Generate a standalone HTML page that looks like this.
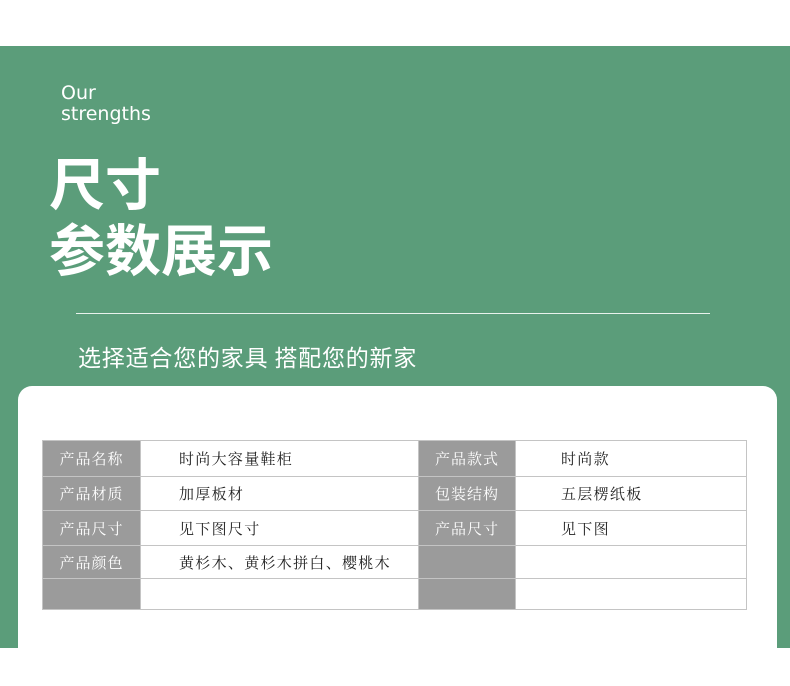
<!DOCTYPE html>
<html><head><meta charset="utf-8"><style>
*{margin:0;padding:0;box-sizing:border-box}
body{width:790px;height:648px;background:#fff;position:relative;overflow:hidden;font-family:"Liberation Sans","Noto Sans CJK SC",sans-serif}
.g{position:absolute;left:0;top:46px;width:790px;height:602px;background:#5b9d7a}
.t{position:absolute;color:#fff}
.card{position:absolute;left:18px;top:386px;width:759px;height:300px;background:#fff;border-radius:14px}
table{position:absolute;left:42px;top:440px;border-collapse:collapse;font-family:"Noto Serif CJK SC","Noto Sans CJK SC",serif;font-size:15px;color:#222}
td{border:1px solid #c4c4c4;padding:0;letter-spacing:1.3px}
td.h{background:#9b9b9b;color:#fff;text-align:center;letter-spacing:1px}
td.v{padding-left:38px}
</style></head><body>
<div class="g"></div>
<div class="t" style="left:61px;top:83px;font-size:19px;line-height:21px;font-family:'DejaVu Sans',sans-serif">Our<br>strengths</div>
<div class="t" style="left:49px;top:149px;font-size:56px;font-weight:bold;line-height:66px;font-family:'Noto Sans CJK SC',sans-serif">尺寸<br>参数展示</div>
<div style="position:absolute;left:76px;top:313px;width:634px;height:1px;background:#e8f2ec"></div>
<div class="t" style="left:78px;top:340px;font-size:23px;line-height:32px;letter-spacing:0.8px;font-family:'Noto Sans CJK SC',sans-serif">选择适合您的家具 搭配您的新家</div>
<div class="card"></div>
<table>
<tr style="height:36px"><td class="h" style="width:98px">产品名称</td><td class="v" style="width:278px">时尚大容量鞋柜</td><td class="h" style="width:97px">产品款式</td><td class="v" style="width:231px;padding-left:45px">时尚款</td></tr>
<tr style="height:34px"><td class="h">产品材质</td><td class="v">加厚板材</td><td class="h">包装结构</td><td class="v" style="padding-left:45px">五层楞纸板</td></tr>
<tr style="height:35px"><td class="h">产品尺寸</td><td class="v">见下图尺寸</td><td class="h">产品尺寸</td><td class="v" style="padding-left:45px">见下图</td></tr>
<tr style="height:33px"><td class="h">产品颜色</td><td class="v">黄杉木、黄杉木拼白、樱桃木</td><td class="h"></td><td class="v"></td></tr>
<tr style="height:31px"><td class="h"></td><td class="v"></td><td class="h"></td><td class="v"></td></tr>
</table>
</body></html>
